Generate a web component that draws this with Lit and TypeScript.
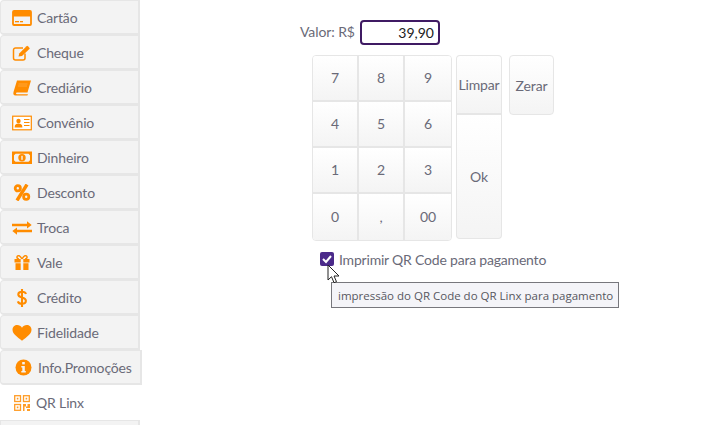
import { LitElement, html, css, svg } from "lit";
import { customElement } from "lit/decorators.js";

const O = "#ff8c00";
const icons: Record<string, any> = {
  card: svg`<svg class="ic" style="width:20px;height:16px" viewBox="0 0 20 16"><rect x="1" y="1" width="18" height="14" rx="1" fill="none" stroke="${O}" stroke-width="1.800"/><rect x="1" y="1" width="18" height="5.500" fill="${O}"/><rect x="3" y="11" width="4" height="1.300" fill="${O}"/><rect x="8" y="11" width="3" height="1.300" fill="${O}"/></svg>`,
  check: svg`<svg class="ic" style="width:20px;height:16px" viewBox="0 0 20 16"><path d="M13 8.500V13a2 2 0 0 1-2 2H3.500a2 2 0 0 1-2-2V5a2 2 0 0 1 2-2H11" fill="none" stroke="${O}" stroke-width="1.500"/><path d="M6.500 11.500l.7-3L14.500 1.200a1 1 0 0 1 1.400 0l1.500 1.500a1 1 0 0 1 0 1.400L10 11z" fill="${O}"/></svg>`,
  book: svg`<svg class="ic" style="width:20px;height:16px" viewBox="0 0 20 16"><path d="M5 .5h14l-3.500 12H5c-1.300 0-1.300 1.800 0 1.800h11l-.6 1.200H3.500C1.500 15.500 1 14 1.500 12z" fill="${O}"/><path d="M6.500 4h9M6 6h9" stroke="#ffc070" stroke-width=".5"/></svg>`,
  id: svg`<svg class="ic" style="width:20px;height:16px" viewBox="0 0 20 16"><rect x=".7" y="1.200" width="18.600" height="13.600" fill="#fff" stroke="${O}" stroke-width="1.200"/><circle cx="6.500" cy="6" r="2.200" fill="${O}"/><path d="M2.600 12.500c0-3 1.500-4 3.900-4s3.900 1 3.900 4z" fill="${O}"/><path d="M12 4.500h5.500M12 7.500h5.500M12 10.500h5.500" stroke="${O}" stroke-width="1.200"/></svg>`,
  money: svg`<svg class="ic" style="width:20px;height:14px" viewBox="0 0 20 14"><path fill-rule="evenodd" d="M0 .5h20v12.500H0zM3.500 2.800L2 4.300v5l1.500 1.500h13L18 9.300v-5l-1.500-1.500z" fill="${O}"/><circle cx="10" cy="6.800" r="3.700" fill="${O}"/><rect x="9.300" y="4.800" width="1.400" height="4" fill="#f3f3f3"/></svg>`,
  pct: svg`<svg class="ic" style="width:20px;height:17px" viewBox="0 0 20 17"><circle cx="5.800" cy="4.300" r="2.600" fill="none" stroke="${O}" stroke-width="2.800"/><circle cx="14.200" cy="12.700" r="2.600" fill="none" stroke="${O}" stroke-width="2.800"/><path d="M15 .5L5 16.500" stroke="${O}" stroke-width="3.400"/></svg>`,
  swap: svg`<svg class="ic" style="width:20px;height:14px" viewBox="0 0 20 14"><path d="M0 2.800h15V.3l4.700 3.700L15 7.500V5.200H0zM20 8.800H5V6.500L.3 10 5 13.700v-2.500h15z" fill="${O}"/></svg>`,
  gift: svg`<svg class="ic" style="width:20px;height:15px" viewBox="0 0 20 15"><path d="M2.500 4h15v3.400h-15zM3.500 8.300h13V15h-13z" fill="${O}"/><rect x="8.700" y="4" width="2.600" height="11" fill="#f3f3f3"/><path d="M10 4C8 .5 6.500.3 5.500 1c-1 1-.5 3 1.500 3M10 4c2-3.500 3.500-3.700 4.500-3 1 1 .5 3-1.500 3" fill="none" stroke="${O}" stroke-width="1.500"/></svg>`,
  dollar: svg`<svg class="ic" style="width:20px;height:18px" viewBox="0 0 20 18"><path d="M14 5c-.5-1.500-2-2.200-4-2.200-2.200 0-3.700 1-3.700 2.700 0 4 7.600 2 7.600 6.300 0 1.800-1.600 3-3.900 3-2.200 0-3.600-.9-4.200-2.500M10 0v18" fill="none" stroke="${O}" stroke-width="2.100"/></svg>`,
  heart: svg`<svg class="ic" style="width:20px;height:16px" viewBox="0 0 20 16"><path d="M10 15.800C5 11.800.5 9 .5 4.800.5 2 2.700 0 5.200 0 7.200 0 9 1 10 2.800 11 1 12.800 0 14.800 0c2.500 0 4.700 2 4.700 4.800 0 4.200-4.500 7-9.500 11z" fill="${O}"/></svg>`,
  info: svg`<svg class="ic" style="width:17px;height:17px" viewBox="0 0 17 17"><circle cx="8.500" cy="8.500" r="8" fill="${O}"/><rect x="7.200" y="3" width="2.600" height="2.400" fill="#f3f3f3"/><path d="M6.300 7h3.500v5h1v1.500H6.300V12h1V8.500h-1z" fill="#f3f3f3"/></svg>`,
  qr: svg`<svg class="ic qr" style="width:16px;height:16px" viewBox="0 0 16 16"><g fill="none" stroke="${O}" stroke-width="1.300"><rect x=".7" y=".7" width="5.800" height="5.800"/><rect x="9.500" y=".7" width="5.800" height="5.800"/><rect x=".7" y="9.500" width="5.800" height="5.800"/></g><path d="M2.800 2.800h1.600v1.600H2.800zM11.600 2.800h1.600v1.600h-1.600zM2.800 11.600h1.600v1.600H2.800zM9 9h3v2.500h1.500V9H16v4h-4v-1.500h-1.500V16H9zM13 14h3v2h-3z" fill="${O}"/></svg>`,
};

const rows = [
  ["card", "Cartão"], ["check", "Cheque"], ["book", "Crediário"], ["id", "Convênio"],
  ["money", "Dinheiro"], ["pct", "Desconto"], ["swap", "Troca"], ["gift", "Vale"],
  ["dollar", "Crédito"], ["heart", "Fidelidade"],
];

@customElement("app-root")
export class AppRoot extends LitElement {
  static styles = css`
    :host { display: block; width: 724px; height: 425px; overflow: hidden; position: relative; background: #fff;
      font-family: "Lato", "Noto Sans", sans-serif; color: #6a6a78; }
    .page { display: flex; height: 425px; }
    .side { width: 142px; flex: none; }
    .row { box-sizing: border-box; width: 140px; height: 35px; background: #f3f3f3; border: 1px solid #e6e6e6;
      border-width: 1px 2px 2px 1px; border-radius: 4px 0 0 4px; display: flex; align-items: center; gap: 5px;
      padding: 1px 0 0 11px; font-size: 14px; letter-spacing: -0.15px; white-space: nowrap; }
    .ic { flex: none; display: block; }
    .qr { opacity: 0.85; }
    .row.promo { width: 142px; padding-left: 14px; gap: 6px; }
    .row.active { width: 142px; background: #fff; border-color: #fff; padding-left: 13px; gap: 6px; }
    .row.stub { height: 6px; border-bottom: 0; border-radius: 0; padding: 0; }
    .main { flex: none; width: 300px; margin-left: 158px; padding-top: 20px; }
    .value { display: flex; align-items: center; height: 24px; font-size: 14px; }
    .value label { width: 60px; position: relative; top: -1px; letter-spacing: -0.1px; }
    .input { box-sizing: border-box; width: 80px; height: 25px; border: 2px solid #3f1a63; border-radius: 4px;
      color: #222; text-align: right; padding: 0 4px; line-height: 21px; font-size: 14px; }
    .pad { display: flex; align-items: flex-start; margin: 11px 0 0 12px; }
    .keys { display: grid; grid-template-columns: 46px 46px 46px; grid-auto-rows: 46px; width: 138px; margin-right: 4px;
      border: 1px solid #e6e6e6; border-radius: 4px; overflow: hidden; }
    .k, .btn { box-sizing: border-box; display: flex; align-items: center; justify-content: center;
      background: linear-gradient(#fff, #f4f4f4); font-size: 14px; color: #6a6a78;
      border: 1px solid #e6e6e6; }
    .k { border-width: 0 2px 2px 0; padding-bottom: 2px; }
    .k:nth-child(3n) { border-right: 0; }
    .k:nth-child(n+10) { border-bottom: 0; }
    .stack { display: flex; flex-direction: column; width: 46px; margin-right: 7px; }
    .btn.lim { height: 60px; border-radius: 4px 4px 0 0; border-bottom-width: 2px; letter-spacing: -0.15px; }
    .btn.ok { height: 124px; border-radius: 0 0 4px 4px; border-top: 0; }
    .btn.zer { height: 60px; width: 45px; border-radius: 4px; letter-spacing: -0.15px; }
    .chk { display: flex; align-items: center; gap: 5px; margin: 7px 0 0 20px; font-size: 14px; letter-spacing: -0.2px; height: 22px; white-space: nowrap; }
    .box { width: 14px; height: 14px; display: block; flex: none; }
    .tip { position: absolute; left: 331px; top: 282px; box-sizing: border-box; width: 288px; height: 26px;
      background: #f4f4f8; border: 1px solid #77777c; color: #575760; font-size: 11.500px; line-height: 26px;
      padding-left: 6px; white-space: nowrap; font-family: "Open Sans", "Noto Sans", sans-serif; }
    .cursor { position: absolute; left: 327px; top: 264px; width: 14px; height: 20px; }
  `;
  render() {
    return html`<div class="page">
      <div class="side">
        ${rows.map(([i, t]) => html`<div class="row">${icons[i]}<span>${t}</span></div>`)}
        <div class="row promo">${icons.info}<span>Info.Promoções</span></div>
        <div class="row active">${icons.qr}<span>QR Linx</span></div>
        <div class="row stub"></div>
      </div>
      <div class="main">
        <div class="value"><label>Valor: R$</label><div class="input">39,90</div></div>
        <div class="pad">
          <div class="keys">
            ${["7","8","9","4","5","6","1","2","3","0",",","00"].map(k => html`<div class="k">${k}</div>`)}
          </div>
          <div class="stack"><div class="btn lim">Limpar</div><div class="btn ok">Ok</div></div>
          <div class="btn zer">Zerar</div>
        </div>
        <div class="chk">
          <svg class="box" viewBox="0 0 14 14"><rect width="14" height="14" rx="2" fill="#4b2a8a"/><path d="M3 7l3 3 5-6" fill="none" stroke="#fff" stroke-width="2"/></svg>
          <span>Imprimir QR Code para pagamento</span>
        </div>
      </div>
    </div>
    <div class="tip">impressão do QR Code do QR Linx para pagamento</div>
    <svg class="cursor" viewBox="0 0 14 20"><path d="M1 1v15l3.500-3.300 2.500 6 2.500-1-2.500-5.700h5z" fill="#fff" stroke="#222" stroke-width="1"/></svg>`;
  }
}
